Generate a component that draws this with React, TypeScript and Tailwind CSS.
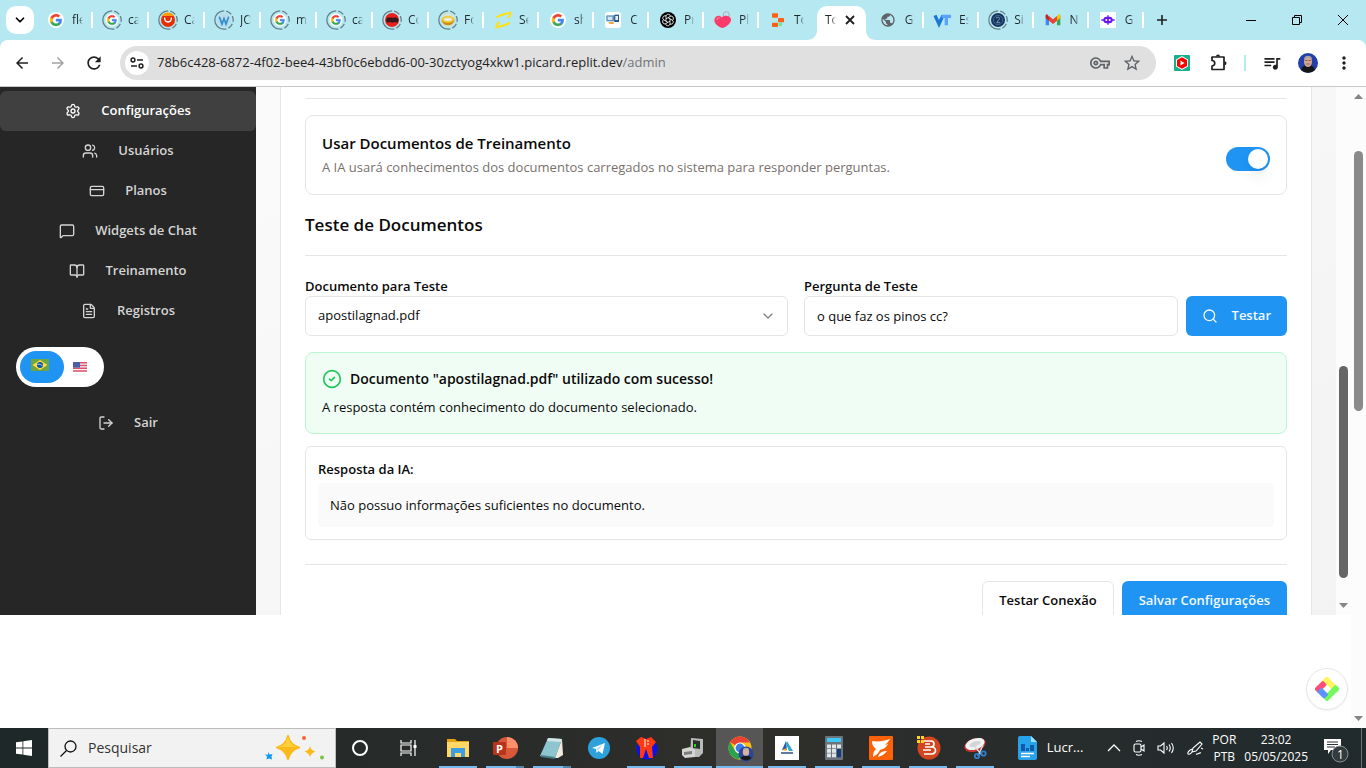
import React, { useState } from "react";
import {
  BookOpen,
  ChevronDown,
  CircleCheck,
  CreditCard,
  FileText,
  LogOut,
  MessageSquare,
  Search,
  Settings,
  Users,
} from "lucide-react";
import {
  MdArrowBack,
  MdArrowForward,
  MdMoreVert,
  MdOutlineQueueMusic,
  MdOutlineVpnKey,
  MdPublic,
  MdRefresh,
  MdStarBorder,
} from "react-icons/md";

type Kids = { children: React.ReactNode };

/* ---------- Favicons ---------- */

const GoogleG = ({ small = false }: { small?: boolean }) => (
  <g transform={small ? "translate(2.4 2.4) scale(.8)" : ""}>
    <circle cx="12" cy="12" r="12" fill="#fff" />
    <g transform="translate(3 3) scale(.75)" strokeWidth=".8">
      <path fill="#4285f4" stroke="#4285f4" d="M23.5 12.3c0-.8-.1-1.6-.2-2.3H12v4.500h6.500a5.500 5.500 0 0 1-2.400 3.600v3h3.900c2.200-2 3.500-5.100 3.500-8.800z" />
      <path fill="#34a853" stroke="#34a853" d="M12 24c3.200 0 6-1.100 8-2.900l-3.900-3a7.200 7.200 0 0 1-10.800-3.800h-4v3.100A12 12 0 0 0 12 24z" />
      <path fill="#fbbc04" stroke="#fbbc04" d="M5.300 14.300a7.200 7.200 0 0 1 0-4.600V6.600h-4a12 12 0 0 0 0 10.800z" />
      <path fill="#ea4335" stroke="#ea4335" d="M12 4.800c1.800 0 3.300.6 4.600 1.800L20 3.200A12 12 0 0 0 1.300 6.600l4 3.100A7.200 7.200 0 0 1 12 4.800z" />
    </g>
  </g>
);

const Ring = ({ children }: Kids) => (
  <>
    <circle cx="12" cy="12" r="13.8" fill="none" stroke="#647f87" strokeWidth="1.900" strokeDasharray="43.400 3 9 3 9 3 9 3 4.300" transform="rotate(90 12 12)" />
    {children}
  </>
);

const favicons: Record<string, React.ReactNode> = {
  google: <GoogleG />,
  googleRing: <Ring><GoogleG small /></Ring>,
  ali: (
    <Ring>
      <circle cx="12" cy="12" r="10.500" fill="#e62e04" />
      <path d="M3 6a10.500 10.500 0 0 1 18 0z" fill="#ff9a00" />
      <path d="M7 9c0 8 10 8 10 0" fill="none" stroke="#fff" strokeWidth="2" strokeLinecap="round" />
    </Ring>
  ),
  wp: (
    <Ring>
      <circle cx="12" cy="12" r="10.500" fill="#b9dcec" />
      <path d="M5 7l4 11 3-8 3 8 4-11" fill="none" stroke="#2f8fca" strokeWidth="2.500" />
    </Ring>
  ),
  red: (
    <Ring>
      <circle cx="12" cy="12" r="10.500" fill="#e9211c" />
      <path d="M3 13c1-5 4-6 6-4l2-1 3 1c3-2 6-1 8 3l-2 4-4-1-3 1-4-1-4 1z" fill="#38171a" />
    </Ring>
  ),
  coin: (
    <Ring>
      <circle cx="12" cy="12" r="10" fill="#d8e2cd" />
      <path d="M2 12c2 6 6 8 10 8s8-2 10-8z" fill="#c98f12" />
      <ellipse cx="12" cy="11" rx="9.500" ry="5" fill="#f5c93a" />
      <ellipse cx="12" cy="11" rx="6" ry="2.500" fill="#e8f1e8" />
    </Ring>
  ),
  yellow: (
    <g fill="none" stroke="#ffe012" strokeWidth="3">
      <path d="M2 8C9 4 16 3 23 1c1 4-1 6-4 8" />
      <path d="M22 16c-6 4-13 5-20 7 0-4 2-6 5-8" />
    </g>
  ),
  card: (
    <>
      <rect width="24" height="24" rx="4" fill="#fff" />
      <rect x="2" y="5" width="13" height="9" fill="#5b8fc0" />
      <rect x="4" y="7" width="7" height="5" fill="#d5e7f5" />
      <rect x="14" y="4" width="7" height="11" fill="#24598f" />
      <rect x="15.500" y="6" width="4" height="6" fill="#e8f1f8" />
      <path d="M5 15h8v3H7z" fill="#f0a63a" />
    </>
  ),
  gpt: (
    <>
      <circle cx="12" cy="12" r="12" fill="#000" />
      <g fill="none" stroke="#fff" strokeWidth="1.200">
        {[0, 60, 120, 180, 240, 300].map((a) => (
          <path key={a} d="M12 8.500l-3 1.700v-4a3.300 3.300 0 0 1 6-1.500l1 1.800" transform={`rotate(${a} 12 12)`} />
        ))}
      </g>
    </>
  ),
  heart: (
    <>
      <circle cx="17" cy="4" r="4.500" fill="none" stroke="#b4a9b4" strokeWidth="1.500" />
      <path d="M11 24C1 21-3 14 0 9c2-4 8-5 10-1 4-4 12-3 14 2 1 6-6 12-13 14z" fill="#fb3b6b" />
      <path d="M3 12c0-3 2-4 4-3" stroke="#ff9db4" strokeWidth="1.500" fill="none" />
    </>
  ),
  replit: (
    <>
      <rect x="3" y="2" width="9" height="6.500" rx="1" fill="#ff5f12" />
      <rect x="12" y="9" width="9" height="6.500" rx="1" fill="#ff5f12" />
      <rect x="3" y="16" width="9" height="6.500" rx="1" fill="#ff5f12" />
      <circle cx="15.500" cy="18.500" r="3" fill="#72e59b" />
    </>
  ),
  vt: (
    <g fill="none" strokeWidth="5">
      <path d="M0 5l6 13 6-13" stroke="#1b78d6" />
      <path d="M10 6.500h14M17 6v14" stroke="#5aa3ff" />
    </g>
  ),
  seal: (
    <Ring>
      <circle cx="12" cy="12" r="10.500" fill="#17365f" />
      <circle cx="12" cy="12" r="7" fill="none" stroke="#5a7ba5" />
      <path d="M9 9c4-3 7 0 4 3l-3 4h5" fill="none" stroke="#7f9bc0" strokeWidth="1.400" />
    </Ring>
  ),
  gmail: (
    <>
      <path d="M1 6v14h5V11z" fill="#4285f4" />
      <path d="M23 6v14h-5V11z" fill="#34a853" />
      <path d="M1 5v4l5 4V7L4 4C2 3 1 4 1 5z" fill="#c5221f" />
      <path d="M23 5v4l-5 4V7l2-3c2-1 3 0 3 1z" fill="#fbbc04" />
      <path d="M6 6l6 5 6-5v7l-6 5-6-5z" fill="#ea4335" />
    </>
  ),
  robot: (
    <>
      <rect width="24" height="24" fill="#fff" />
      <rect x="5" y="7" width="14" height="10" rx="5" fill="#6a16f0" />
      <path d="M2 12h20M12 5v14" stroke="#6a16f0" strokeWidth="2" />
      <circle cx="9.500" cy="12" r="1.500" fill="#fff" />
      <circle cx="14.500" cy="12" r="1.500" fill="#fff" />
    </>
  ),
};

const Favicon = ({ name }: { name: string }) =>
  name === "globe" ? (
    <MdPublic className="h-4 w-4 shrink-0 text-[#5f6368]" />
  ) : (
    <svg viewBox="0 0 24 24" className="h-4 w-4 shrink-0 overflow-visible" aria-hidden="true">
      {favicons[name]}
    </svg>
  );

const wideTabs: [string, string][] = [
  ["google", "fle"],
  ["googleRing", "ca"],
  ["ali", "Ca"],
  ["wp", "JO"],
  ["googleRing", "m"],
  ["googleRing", "ca"],
  ["red", "Co"],
];
const midTabs: [string, string][] = [
  ["coin", "Fo"],
  ["yellow", "Se"],
  ["google", "sh"],
  ["card", "C"],
  ["gpt", "Pr"],
  ["heart", "Pl"],
  ["replit", "To"],
];
const endTabs: [string, string][] = [
  ["globe", "G"],
  ["vt", "Es"],
  ["seal", "Si"],
  ["gmail", "N"],
  ["robot", "G"],
];

const TabLabel = ({ children }: Kids) => (
  <span className="w-[11px] overflow-hidden whitespace-nowrap bg-linear-to-r from-[#1f2a2e] from-60% to-transparent bg-clip-text text-xs text-transparent">
    {children}
  </span>
);

const Tab = ({ icon, label, wide, last }: { icon: string; label: string; wide?: boolean; last?: boolean }) => (
  <button className={`flex h-7 shrink-0 items-center gap-2 pl-[11px] ${wide ? "w-14" : "w-[55px]"}`}>
    <Favicon name={icon} />
    <TabLabel>{label}</TabLabel>
    <span className={`ml-auto h-4 w-0.5 ${last ? "" : "bg-white"}`} />
  </button>
);

const Flare = ({ flip }: { flip?: boolean }) => (
  <svg viewBox="0 0 10 10" className={`h-2.5 w-2.5 ${flip ? "-scale-x-100" : ""}`} aria-hidden="true">
    <path d="M10 0v10H0C6 10 10 6 10 0z" fill="#fff" />
  </svg>
);

function TabStrip() {
  return (
    <div className="flex h-10 shrink-0 items-center overflow-hidden bg-[#b6e8f2]">
      <button aria-label="Pesquisar guias" className="ml-1.5 mr-[3px] flex h-7 w-7 shrink-0 items-center justify-center rounded-[10px] bg-white">
        <ChevronDown className="h-3.5 w-3.5" strokeWidth={3} />
      </button>
      {wideTabs.map(([i, l], n) => <Tab key={n} icon={i} label={l} wide />)}
      {midTabs.map(([i, l], n) => <Tab key={n} icon={i} label={l} last={n === 6} />)}
      <div className="-ml-[7px] flex items-end self-end">
        <Flare />
        <div className="flex h-[34px] w-[49px] items-center justify-between rounded-t-[10px] bg-white pb-1.5 pl-2 pr-2.5">
          <TabLabel>To</TabLabel>
          <button aria-label="Fechar guia">
            <svg viewBox="0 0 12 12" className="h-3 w-3" aria-hidden="true">
              <path d="M2 2l8 8M10 2l-8 8" stroke="#1f1f1f" strokeWidth="1.800" />
            </svg>
          </button>
        </div>
        <Flare flip />
      </div>
      <div className="-ml-[7px] flex">
        {endTabs.map(([i, l], n) => <Tab key={n} icon={i} label={l} />)}
      </div>
      <button aria-label="Nova guia" className="ml-2 flex h-5 w-5 items-center justify-center">
        <svg viewBox="0 0 12 12" className="h-3 w-3" aria-hidden="true">
          <path d="M6 1v10M1 6h10" stroke="#1f1f1f" strokeWidth="1.600" />
        </svg>
      </button>
      <div className="ml-auto flex">
        {[
          ["Minimizar", "M0 5.500h10"],
          ["Restaurar", "M.5 2.500h7v7h-7zM2.500 2.500v-2h7v7h-2"],
          ["Fechar", "M0 0l10 10M10 0L0 10"],
        ].map(([name, d]) => (
          <button key={name} aria-label={name} className="flex h-10 w-[46px] items-center justify-center">
            <svg viewBox="0 0 10 10" className="h-2.5 w-2.5 overflow-visible" aria-hidden="true">
              <path d={d} fill="none" stroke="#000" />
            </svg>
          </button>
        ))}
      </div>
    </div>
  );
}

const Portrait = ({ className }: { className: string }) => (
  <svg viewBox="0 0 20 20" className={className} aria-hidden="true">
    <circle cx="10" cy="10" r="10" fill="#2340a8" />
    <path d="M3 17c1-4 4-5 7-5s6 1 7 5a10 10 0 0 1-14 0z" fill="#14161c" />
    <ellipse cx="10" cy="8.500" rx="4" ry="5.500" fill="#d3a48f" />
    <path d="M6 6C6 1.500 14 1.500 14 6c-2-1.500-6-1.500-8 0z" fill="#a7a3a5" />
    <path d="M7 7.500h2.500M10.500 7.500H13M8.500 11h3" stroke="#6b4a42" strokeWidth=".7" />
  </svg>
);

function Toolbar() {
  return (
    <div className="shrink-0 bg-[#b6e8f2]">
      <div className="flex h-[47px] items-center rounded-t-lg border-b border-[#c8c8c8] bg-white text-[#1f1f1f]">
        <div className="flex w-[120px] items-center gap-4 pl-3">
          <button aria-label="Voltar"><MdArrowBack className="h-5 w-5 scale-90" /></button>
          <button aria-label="Avançar"><MdArrowForward className="h-5 w-5 scale-90 text-[#a3a3a3]" /></button>
          <button aria-label="Recarregar"><MdRefresh className="h-5 w-5" /></button>
        </div>
        <div className="flex h-[34px] min-w-0 flex-1 items-center rounded-full bg-[#e0e0e0] pl-[5px] pr-3.5">
          <button aria-label="Informações do site" className="flex h-6 w-6 items-center justify-center rounded-full bg-white">
            <svg viewBox="0 0 14 12" className="h-3 w-3.5" fill="none" stroke="#1f1f1f" strokeWidth="1.500" aria-hidden="true">
              <circle cx="3" cy="3" r="1.900" />
              <path d="M7 3h6M1 9h6" />
              <circle cx="11" cy="9" r="1.900" />
            </svg>
          </button>
          <div className="ml-2 min-w-0 flex-1 truncate text-[13px] text-[#1f1f1f]">
            78b6c428-6872-4f02-bee4-43bf0c6ebdd6-00-30zctyog4xkw1.picard.replit.dev<span className="text-[#70757a]">/admin</span>
          </div>
          <button aria-label="Senhas" className="mr-3"><MdOutlineVpnKey className="h-5 w-5 text-[#5f6368]" /></button>
          <button aria-label="Favoritar"><MdStarBorder className="h-5 w-5 text-[#5f6368]" /></button>
        </div>
        <div className="flex items-center pl-[18px] pr-3">
          <button aria-label="Extensão">
            <svg viewBox="0 0 16 16" className="h-4 w-4" aria-hidden="true">
              <rect width="16" height="16" rx="1" fill="#16b08c" />
              <path d="M8 1l6 3.500v7L8 15l-6-3.500v-7z" fill="#fff" />
              <path d="M8 2.200l5 2.900v5.800l-5 2.900-5-2.900V5.100z" fill="#f00" />
              <path d="M6.500 5.500v5l4-2.500z" fill="#fff" />
            </svg>
          </button>
          <button aria-label="Extensões" className="ml-[18px]">
            <svg viewBox="0 0 20 20" className="h-5 w-5" aria-hidden="true">
              <path d="M4 4h12v12.500H4V13a2.600 2.600 0 0 0 0-5.500z" fill="none" stroke="#1f1f1f" strokeWidth="1.700" strokeLinejoin="round" />
              <path d="M8 3.500a2 2 0 0 1 4 0zM16.500 8.200a2 2 0 0 1 0 4z" fill="#1f1f1f" />
            </svg>
          </button>
          <span className="ml-4 h-4 w-0.5 bg-[#b6e8f2]" />
          <button aria-label="Mídia" className="ml-4"><MdOutlineQueueMusic className="h-5 w-5" /></button>
          <button aria-label="Perfil" className="ml-4"><Portrait className="h-5 w-5" /></button>
          <button aria-label="Menu" className="ml-4"><MdMoreVert className="h-5 w-5" /></button>
        </div>
      </div>
    </div>
  );
}

/* ---------- Admin page ---------- */

const menu = [
  { label: "Configurações", Icon: Settings, active: true },
  { label: "Usuários", Icon: Users },
  { label: "Planos", Icon: CreditCard },
  { label: "Widgets de Chat", Icon: MessageSquare },
  { label: "Treinamento", Icon: BookOpen },
  { label: "Registros", Icon: FileText },
];

function Sidebar() {
  return (
    <aside className="w-64 shrink-0 bg-[#262626] pt-1 text-[13px] font-semibold text-[#d4d4d4]">
      <nav>
        {menu.map(({ label, Icon, active }) => (
          <a key={label} href="#" className={`flex h-10 items-center justify-center gap-5 rounded-md ${active ? "bg-[#404040] text-white" : ""}`}>
            <Icon className="h-4 w-4" />
            {label}
          </a>
        ))}
      </nav>
      <div className="ml-4 mt-4 flex h-10 w-[88px] items-center rounded-full bg-white p-1">
        <button aria-label="Português" className="flex h-8 w-11 items-center justify-center rounded-full bg-[#2094f3] pb-1 pr-1">
          <svg viewBox="0 0 18 12" className="h-3 w-[18px]" aria-hidden="true">
            <rect width="18" height="12" fill="#6da544" />
            <path d="M9 1l7.500 5L9 11 1.500 6z" fill="#ffda44" />
            <circle cx="9" cy="6" r="3" fill="#0052b4" />
            <path d="M6.500 5.500c2-.8 4 0 5 1.500" stroke="#f0f0f0" strokeWidth=".8" fill="none" />
          </svg>
        </button>
        <button aria-label="English" className="ml-[9px]">
          <svg viewBox="0 0 14 10" className="h-2.5 w-3.5" aria-hidden="true">
            <rect width="14" height="10" fill="#f3f0f2" />
            <path d="M0 .7h14M0 3.500h14M0 6.300h14M0 9.100h14" stroke="#e2506c" strokeWidth="1.500" />
            <rect width="7" height="5.600" fill="#4a5fa8" />
          </svg>
        </button>
      </div>
      <a href="#" className="mt-4 flex h-10 items-center justify-center gap-5">
        <LogOut className="h-4 w-4" />
        Sair
      </a>
    </aside>
  );
}

function SettingsForm() {
  const [useDocs, setUseDocs] = useState(true);
  const [question, setQuestion] = useState("o que faz os pinos cc?");
  return (
    <main className="min-w-0 flex-1 overflow-hidden bg-linear-to-br from-[#fafafa] to-[#f3f3f3] px-6">
      <div className="border-x border-[#e5e5e5] bg-white px-6 pt-[11px] text-[13px] text-[#0a0a0a]">
        <hr className="border-[#e5e5e5]" />
        <div className="mt-4 flex h-20 items-center justify-between rounded-lg border border-[#e5e5e5] px-4">
          <div>
            <label htmlFor="use-docs" className="block text-[15px] leading-6 font-semibold">Usar Documentos de Treinamento</label>
            <p className="leading-6 text-[#78716c]">
              A IA usará conhecimentos dos documentos carregados no sistema para responder perguntas.
            </p>
          </div>
          <input
            id="use-docs"
            type="checkbox"
            role="switch"
            checked={useDocs}
            onChange={(e) => setUseDocs(e.target.checked)}
            className="mt-2 flex h-6 w-11 shrink-0 appearance-none items-center rounded-full bg-neutral-200 p-0.5 before:h-5 before:w-5 before:rounded-full before:bg-white before:shadow-lg before:content-[''] checked:justify-end checked:bg-[#2094f3]"
          />
        </div>
        <h2 className="mt-4 text-[17px] leading-7 font-semibold">Teste de Documentos</h2>
        <hr className="mt-4 border-[#e5e5e5]" />
        <div className="mt-5 grid grid-cols-2 gap-4">
          <div>
            <label htmlFor="doc" className="block leading-5 font-semibold">Documento para Teste</label>
            <div className="relative">
              <select id="doc" className="h-10 w-full appearance-none rounded-md border border-[#e5e5e5] bg-white px-3">
                <option>apostilagnad.pdf</option>
              </select>
              <ChevronDown className="pointer-events-none absolute right-3 top-3 h-4 w-4 text-[#858585]" />
            </div>
          </div>
          <div>
            <label htmlFor="question" className="block leading-5 font-semibold">Pergunta de Teste</label>
            <div className="flex gap-2">
              <input
                id="question"
                value={question}
                onChange={(e) => setQuestion(e.target.value)}
                className="h-10 min-w-0 flex-1 rounded-md border border-[#e5e5e5] px-3"
              />
              <button className="flex h-10 items-center gap-3.5 rounded-md bg-[#2094f3] px-4 font-semibold text-[#f4faff]">
                <Search className="h-4 w-4" />
                Testar
              </button>
            </div>
          </div>
        </div>
        <div className="mt-4 h-[82px] rounded-lg border border-[#bbf7d0] bg-[#f0fdf4] px-4 pt-4">
          <div className="flex items-center gap-2 text-sm leading-5 font-semibold">
            <CircleCheck className="h-5 w-5 text-[#22c55e]" />
            Documento "apostilagnad.pdf" utilizado com sucesso!
          </div>
          <p className="mt-2 leading-5">A resposta contém conhecimento do documento selecionado.</p>
        </div>
        <div className="mt-3 h-[94px] rounded-md border border-[#e5e5e5] p-3">
          <h3 className="leading-5 font-semibold">Resposta da IA:</h3>
          <p className="mt-1 rounded bg-[#fafafa] p-3 leading-5">Não possuo informações suficientes no documento.</p>
        </div>
        <hr className="mt-6 border-[#e5e5e5]" />
        <div className="mt-4 flex justify-end gap-2 pb-6 font-semibold">
          <button className="h-10 rounded-md border border-[#e5e5e5] px-4">Testar Conexão</button>
          <button className="h-10 rounded-md bg-[#2094f3] px-[17px] text-[#f4faff]">Salvar Configurações</button>
        </div>
      </div>
    </main>
  );
}

const Arrow = ({ up }: { up?: boolean }) => (
  <svg viewBox="0 0 9 5" className={`h-[5px] w-[9px] shrink-0 ${up ? "rotate-180" : ""}`} aria-hidden="true">
    <path d="M0 0h9L4.500 5z" fill="#858585" />
  </svg>
);

/* ---------- Taskbar ---------- */

const apps: { name: string; line: "none" | "one" | "stack"; active?: boolean; art: React.ReactNode }[] = [
  {
    name: "Explorador de Arquivos", line: "one",
    art: <><path d="M1 3h8l2 2h12v5H1z" fill="#e2a312" /><rect x="1" y="6" width="22" height="15" fill="#ffd865" /><path d="M5 12h14v9h-4v-4H9v4H5z" fill="#3c9de0" /></>,
  },
  {
    name: "PowerPoint", line: "stack",
    art: <><circle cx="14" cy="12" r="11" fill="#d9583a" /><path d="M14 1a11 11 0 0 1 11 11H14z" fill="#ff8f6b" /><rect x="0" y="6" width="13" height="13" rx="1" fill="#b7341b" /><text x="3" y="16.500" fontSize="11" fontWeight="700" fill="#fff">P</text></>,
  },
  {
    name: "Bloco de Notas", line: "stack",
    art: <><path d="M8 2l14 1-7 19-15-2z" fill="#8ec6cf" /><path d="M8 2l14 1-1 3-14-1z" fill="#d5e6e9" /><path d="M22 3l1 16-5 3h-3z" fill="#f2ece0" /><path d="M1 20l14 2" stroke="#477f8a" strokeWidth="2" /></>,
  },
  {
    name: "Telegram", line: "none",
    art: <><circle cx="12" cy="12" r="11" fill="#2ca1dc" /><path d="M5 12l13-5-2.500 11-4-3-2 2-.5-4z" fill="#fff" /><path d="M9 13l7-5-5 7z" fill="#bfe0f3" /></>,
  },
  {
    name: "Aplicativo", line: "one",
    art: <><circle cx="13" cy="13" r="10.500" fill="#0a12e8" /><path d="M2 5l5-4 5 2 5-2 5 5-4 5 1 11h-4l-3-9-3 9H6V11z" fill="#ff3a12" /><path d="M11 3v8M13 5h2M13 8h2" stroke="#fff" strokeWidth="1" /></>,
  },
  {
    name: "Impressora", line: "one",
    art: <><path d="M10 2l12 1v14l-4 4H9z" fill="#b9bbbb" /><path d="M12 4l7 1v8l-7-1z" fill="#2b302c" /><rect x="13" y="8" width="2" height="3" fill="#25d827" /><path d="M1 13l8-2 5 3v7l-10 1-3-3z" fill="#d3d4d4" /><path d="M3 16l8-1v3l-8 1z" fill="#7b7d7d" /></>,
  },
  {
    name: "Chrome", line: "one", active: true,
    art: (
      <>
        <circle cx="12" cy="12" r="11.500" fill="#fbc116" />
        <path d="M12 12L2 6A11.500 11.500 0 0 1 22 6.500H12z" fill="#ea4335" />
        <path d="M2 6a11.500 11.500 0 0 0 8.500 17.400L16 14.500H7z" fill="#2ba24c" />
        <circle cx="12" cy="12" r="5.600" fill="#fff" /><circle cx="12" cy="12" r="4.400" fill="#3b7ded" />
        <circle cx="18" cy="18" r="7.500" fill="#2a459c" /><ellipse cx="18" cy="16" rx="3.200" ry="4" fill="#d9b09b" /><path d="M12.500 22c2-3 9-3 11 0a7.500 7.500 0 0 1-11 0z" fill="#16181d" /><path d="M15 14c0-3 6-3 6 0-2-1-4-1-6 0z" fill="#aaa" />
      </>
    ),
  },
  {
    name: "Aplicativo Alfa", line: "one",
    art: <><rect width="24" height="24" fill="#fff" /><path d="M11 5l-4 9h5z" fill="#215fb0" /><path d="M12 5l6 10h-4l-3-7z" fill="#35a5c8" /><path d="M7 14l5-2-1 3z" fill="#f2b31e" /><path d="M6 17h12" stroke="#2f4d86" strokeWidth="1.500" /></>,
  },
  {
    name: "Calculadora", line: "one",
    art: <><rect x="3" width="18" height="24" rx="1" fill="#6b737c" /><rect x="5" y="2" width="14" height="4" fill="#42c8f4" /><g fill="#e1e5e8">{[8.5, 13, 17.5].map((y) => <g key={y}><rect x="5" y={y} width="4" height="3.800" /><rect x="10" y={y} width="4" height="3.800" /></g>)}<rect x="15" y="8.500" width="4" height="3.800" /></g><rect x="15" y="13" width="4" height="8.300" fill="#143c73" /></>,
  },
  {
    name: "Foxit", line: "one",
    art: <><rect width="24" height="24" rx="1" fill="#ff6206" /><path d="M3 5c6 1 12 0 18-2-2 3-3 4-5 6l3-1c-2 4-5 5-8 6-1 3-4 5-7 7 0-4 1-6 3-8C4 11 3 8 3 5z" fill="#fff" /><path d="M9 21c1-4 4-6 9-6-2 3-5 5-9 6z" fill="#fff" /></>,
  },
  {
    name: "Bitvise", line: "one",
    art: <><circle cx="13" cy="12" r="11.500" fill="#d2451e" /><path d="M8 5h7a3 3 0 0 1 0 6H9M15 11h1a3.500 3.500 0 0 1 0 7H8M9 8h5M7 14h8" fill="none" stroke="#fff" strokeWidth="1.700" /><path d="M1 0h3v3H1zM5 0h3v3H5zM1 4h3v3H1zM5 4h3v3H5z" fill="#ffd51f" /></>,
  },
  {
    name: "Ferramenta de Captura", line: "one",
    art: <><ellipse cx="12" cy="9" rx="11" ry="6.500" fill="#c4362f" transform="rotate(-18 12 9)" /><ellipse cx="12" cy="8" rx="10" ry="5.500" fill="#f3f3f3" transform="rotate(-18 12 8)" /><ellipse cx="12" cy="8" rx="6" ry="2.500" fill="#d2d6d8" transform="rotate(-18 12 8)" /><path d="M12 11l7 8M20 9l-5 11" stroke="#d5d8dc" strokeWidth="1.500" /><g fill="none" stroke="#2f7fc9" strokeWidth="1.800"><circle cx="14" cy="20" r="2.200" /><circle cx="20.500" cy="17.500" r="2.200" /></g></>,
  },
];

function Taskbar() {
  return (
    <footer className="flex h-10 shrink-0 items-stretch bg-linear-to-r from-[#1e2828] via-[#2f2e2b] via-55% to-[#202a2d] text-white">
      <button aria-label="Iniciar" className="flex w-12 items-center justify-center">
        <svg viewBox="0 0 16 16" className="h-4 w-4" fill="#fff" aria-hidden="true">
          <path d="M0 2.300l6.500-.9v6.200H0zM7.300 1.300L16 0v7.600H7.300zM0 8.400h6.500v6.200L0 13.700zM7.300 8.400H16V16l-8.700-1.300z" />
        </svg>
      </button>
      <label className="flex w-72 items-center border border-[#bdbdbd] bg-[#f2f2f2] pl-[11px] pr-[9px]">
        <svg viewBox="0 0 17 17" className="h-[17px] w-[17px] shrink-0" fill="none" stroke="#111" strokeWidth="1.300" aria-hidden="true">
          <circle cx="10.500" cy="6.500" r="5.500" /><path d="M6.500 10.500L.5 16.500" />
        </svg>
        <input type="text" placeholder="Pesquisar" aria-label="Pesquisar" className="ml-[11px] min-w-0 flex-1 bg-transparent text-sm outline-none placeholder:text-[#333]" />
        <svg viewBox="0 0 62 26" className="h-[26px] w-[62px] shrink-0" aria-hidden="true">
          <path d="M24 1q2 9 11 11.500Q26 15 24 24q-2-9-11-11.500Q22 10 24 1z" fill="#fbb91c" stroke="#fbb91c" strokeWidth="2" strokeLinejoin="round" />
          <path d="M24 2q2 8 9 10H14q8-2 10-10z" fill="#ffd03c" />
          <path d="M46 11q1 4.500 5.500 5.500Q47 18 46 22q-1-4-5.500-5.500Q45 15.500 46 11z" fill="#fbb91c" />
          <path d="M4 17l1.500 2.500 3-.5-1 2.500L8 24.500l-3-1-2.500 1 .5-3-2-2 3 .3z" fill="#0f9bef" />
          <circle cx="40" cy="3" r="2" fill="#f26430" /><circle cx="58" cy="22.500" r="2" fill="#7fc241" />
        </svg>
      </label>
      <button aria-label="Cortana" className="flex w-12 items-center justify-center">
        <span className="h-4 w-4 rounded-full border-2 border-white" />
      </button>
      <button aria-label="Visão de Tarefas" className="mr-0.5 flex w-12 items-center justify-center">
        <svg viewBox="0 0 17 16" className="h-4 w-[17px]" fill="none" stroke="#fff" strokeWidth="1.200" aria-hidden="true">
          <path d="M1 0v3h10V0M1 16v-3h10v3M1 5h10v6H1zM15 0v16" /><path d="M13.500 5h3v3h-3z" fill="#fff" stroke="none" />
        </svg>
      </button>
      {apps.map((a) => (
        <button key={a.name} aria-label={a.name} className={`flex w-[47px] flex-col items-center justify-between pt-2 ${a.active ? "bg-[#555655]" : ""}`}>
          <svg viewBox="0 0 24 24" className="h-6 w-6 overflow-visible" aria-hidden="true">{a.art}</svg>
          <span className={`flex h-0.5 justify-end ${a.active ? "w-full" : "w-[38px]"} ${a.line === "none" ? "" : "bg-[#76b9ed]"}`}>
            {a.line === "stack" && <span className="h-0.5 w-2 bg-[#4f86ad]" />}
          </span>
        </button>
      ))}
      <button className="ml-auto flex items-center gap-2.5 text-[13px]">
        <svg viewBox="0 0 19 24" className="h-6 w-[19px]" aria-hidden="true">
          <path d="M2 0h11l6 6v16a2 2 0 0 1-2 2H2a2 2 0 0 1-2-2V2a2 2 0 0 1 2-2z" fill="#27a3ec" />
          <path d="M13 0l6 6h-6z" fill="#9be0ff" />
          <path d="M3 8h4v7H3zM8 12h3v3H8zM12 9h4v6h-4z" fill="#0d5ca8" />
          <path d="M3 17.500h13M3 20.500h9" stroke="#fff" strokeWidth="1.500" />
        </svg>
        Lucr...
      </button>
      <div className="ml-6 flex items-center gap-3">
        <svg viewBox="0 0 14 8" className="h-2 w-3.5" aria-hidden="true"><path d="M1 7l6-6 6 6" fill="none" stroke="#fff" strokeWidth="1.300" /></svg>
        <svg viewBox="0 0 12 16" className="h-4 w-3" fill="none" stroke="#fff" strokeWidth="1.100" aria-hidden="true"><rect x="1" y="4" width="7" height="8" rx="1.500" /><path d="M8 7l3-2v6l-3-2M3 1.500q3-1.500 6 0M3 14.500q3 1.500 6 0" /></svg>
        <svg viewBox="0 0 18 14" className="h-3.5 w-[18px]" fill="none" stroke="#fff" strokeWidth="1.100" aria-hidden="true"><path d="M1 5h2.500L7 2v10L3.500 9H1zM9.500 5q1.500 2 0 4M12 3.500q2.500 3.500 0 7M14.500 2q3.500 5 0 10" /></svg>
        <svg viewBox="0 0 17 15" className="h-[15px] w-[17px]" fill="none" stroke="#fff" strokeWidth="1.100" aria-hidden="true"><path d="M5 11l1-4 7-6 2 2-6 7zM5 11c-3 4-6 2-3-1 2-2 4-3 3 1zM9 13c2 1 3-2 5-1M14 7l2 1" /></svg>
      </div>
      <div className="ml-2 flex flex-col items-center justify-center text-xs leading-[17px]"><span>POR</span><span>PTB</span></div>
      <div className="ml-2 flex flex-col items-center justify-center text-xs leading-[17px]"><span>23:02</span><span>05/05/2025</span></div>
      <button aria-label="Notificações" className="ml-4 mr-3 flex items-center">
        <svg viewBox="0 0 25 26" className="mt-1 h-[26px] w-[25px]" aria-hidden="true">
          <path d="M0 2h17v11H7l-3 4v-4H0z" fill="#fff" />
          <path d="M3 5h11M3 7.500h11M3 10h8" stroke="#2b3335" strokeWidth="1" />
          <circle cx="16" cy="17" r="8" fill="#333b3d" stroke="#8a8f90" />
          <text x="13" y="21.500" fontSize="12" fill="#fff">1</text>
        </svg>
      </button>
      <span className="mr-1 w-px bg-[#6c7475]" />
    </footer>
  );
}

export default function App() {
  return (
    <div className="flex h-screen flex-col overflow-hidden bg-white font-['Open_Sans','Noto_Sans',sans-serif]">
      <TabStrip />
      <Toolbar />
      <div className="flex min-h-0 flex-1">
        <div className="flex min-w-0 flex-1 flex-col">
          <div className="flex min-h-0 flex-1 overflow-hidden">
            <Sidebar />
            <SettingsForm />
            <div className="flex w-[15px] shrink-0 flex-col items-center justify-end bg-[#fcfcfc] pb-[7px]">
              <div className="mb-[25px] h-[212px] w-[9px] rounded-full bg-[#666]" />
              <Arrow />
            </div>
          </div>
          <div className="flex h-[113px] shrink-0 items-center justify-end pr-[3px] pt-[34px]">
            <button aria-label="Assistente" className="flex h-[42px] w-[42px] items-center justify-center rounded-full border border-[#e5e7eb] bg-white shadow-xs">
              <svg viewBox="0 0 24 24" className="h-6 w-6" aria-hidden="true">
                <g transform="rotate(45 12 12)">
                  <rect x="3" y="3" width="18" height="6" rx="1.500" fill="#fff45c" />
                  <rect x="15" y="3" width="6" height="18" rx="1.500" fill="#74f95c" />
                  <rect x="3" y="15" width="14" height="6" rx="1.500" fill="#5c94ff" />
                  <rect x="15" y="3" width="6" height="6" rx="1.500" fill="#74f95c" />
                  <rect x="3" y="3" width="6" height="8" rx="1.500" fill="#fff45c" />
                  <rect x="3" y="9" width="6" height="12" rx="1.500" fill="#ff4d73" />
                  <rect x="7" y="15" width="9" height="6" fill="#5c94ff" />
                </g>
              </svg>
            </button>
          </div>
        </div>
        <div className="flex w-[15px] shrink-0 flex-col items-center bg-[#fcfcfc] py-[7px]">
          <Arrow up />
          <div className="mt-[52px] h-[260px] w-[9px] rounded-full bg-[#8a8a8a]" />
          <div className="flex-1" />
          <Arrow />
        </div>
      </div>
      <Taskbar />
    </div>
  );
}
